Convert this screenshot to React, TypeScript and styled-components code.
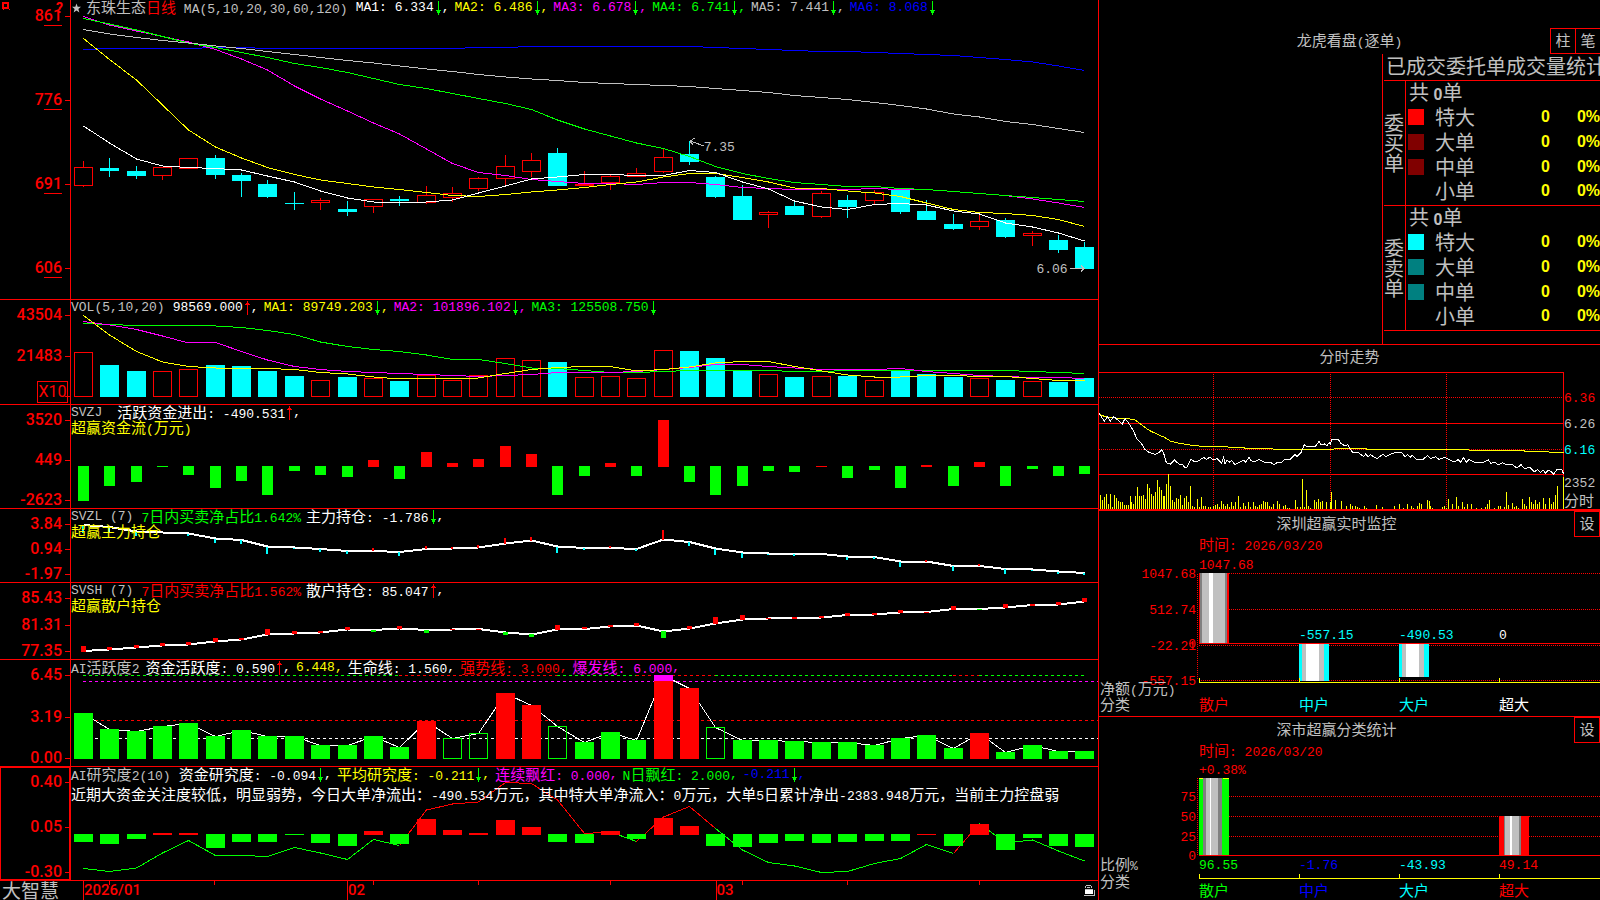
import React from 'react';
import styled, { createGlobalStyle, css } from 'styled-components';

const C = {
  red: '#ff0000',
  green: '#00ff00',
  cyan: '#00ffff',
  yellow: '#ffff00',
  magenta: '#ff00ff',
  blue: '#0000ff',
  gray: '#c0c0c0',
  dim: '#808080',
  white: '#ffffff',
};

const LATIN = "'Liberation Mono', 'Noto Sans CJK SC', monospace";
const HAN = "'Noto Sans CJK SC', sans-serif";
const AXIS = "Roboto, 'Liberation Sans', sans-serif";

const GlobalStyle = createGlobalStyle`
  * { box-sizing: border-box; }
  body { margin: 0; background: #000; color: ${C.gray}; font: 13px/15px ${LATIN}; }
  button { font: inherit; color: inherit; background: none; margin: 0; padding: 0; cursor: pointer; }
`;

/* ---------- shared pieces ---------- */

const Han = styled.span`
  font-family: ${HAN};
  font-size: 15px;
  line-height: 1;
`;

const HAN_RUN = /([\u3000-\u303f\u4e00-\u9fff\uff00-\uffef]+)/;

function Mixed({ text }: { text: string }) {
  return (
    <>
      {text.split(HAN_RUN).map((part, i) => (i % 2 ? <Han key={i}>{part}</Han> : part))}
    </>
  );
}

function SvgMixed({ text }: { text: string }) {
  return (
    <>
      {text.split(HAN_RUN).map((part, i) => (
        <tspan key={i} fontFamily={i % 2 ? HAN : LATIN} fontSize={i % 2 ? 15 : 13}>
          {part}
        </tspan>
      ))}
    </>
  );
}

const Page = styled.div`
  display: grid;
  grid-template-columns: minmax(0, 1fr) 502px;
  min-height: 100vh;
  overflow: hidden;
`;

/* ---------- left: stacked indicator panels ---------- */

const Charts = styled.main`
  display: grid;
  grid-template-rows: 300fr 105fr 104fr 74fr 77fr 107fr 114fr 19px;
  height: 100vh;
  min-height: 720px;
`;

const Panel = styled.section`
  display: grid;
  grid-template-columns: 71px minmax(0, 1fr);
  grid-template-rows: minmax(0, 1fr);
  min-height: 0;
  border-bottom: 1px solid ${C.red};
`;

const Axis = styled.div<{ $tall?: boolean; $active?: boolean }>`
  position: relative;
  display: flex;
  flex-direction: column;
  align-items: flex-end;
  justify-content: space-between;
  min-height: 0;
  padding: ${p => (p.$tall ? '8px 8px 23px' : '7px 8px 0')};
  border-right: 1px solid ${C.red};
  ${p =>
    p.$active &&
    css`
      box-shadow: inset 1px 1px ${C.red}, inset -1px -1px ${C.red};
    `}
`;

const AxisLabel = styled.span`
  position: relative;
  height: 16px;
  color: ${C.red};
  font: 500 16px/16px ${AXIS};
  &::after {
    content: '';
    position: absolute;
    top: 8px;
    right: -8px;
    width: 5px;
    height: 1px;
    background: ${C.red};
  }
`;

const Decimals = styled.span`
  display: inline-block;
  height: 18px;
  border-bottom: 1px solid ${C.red};
`;

const Unit = styled.span`
  position: absolute;
  right: 2px;
  bottom: 1px;
  width: 31px;
  border: 1px solid ${C.red};
  color: ${C.red};
  text-align: center;
  font: 16px/20px ${AXIS};
`;

const Help = styled.button`
  position: absolute;
  top: 1px;
  left: 56px;
  border: 0;
  font: bold 14px/14px ${AXIS};
  color: ${C.red};
`;

const Pin = styled.svg`
  position: absolute;
  top: 2px;
  left: 2px;
`;

const Plot = styled.div`
  position: relative;
  display: grid;
  grid-template-rows: minmax(0, 1fr);
  grid-template-columns: minmax(0, 1fr);
  min-height: 0;
  & > * {
    grid-area: 1 / 1;
  }
`;

const Graph = styled.svg`
  display: block;
  width: 100%;
  height: 100%;
  min-height: 0;
  & * {
    vector-effect: non-scaling-stroke;
  }
`;

const Legend = styled.div`
  z-index: 1;
  align-self: start;
`;

const LegendLine = styled.div<{ $low?: boolean }>`
  display: flex;
  align-items: center;
  gap: 5px;
  height: 15px;
  margin-top: ${p => (p.$low ? '5px' : 0)};
  white-space: pre;
  color: ${C.white};
`;

const Title = styled.span<{ $gap?: number }>`
  color: ${C.gray};
  margin-right: ${p => p.$gap ?? 3}px;
`;

const Star = styled.svg`
  margin-left: 1px;
`;

const Reading = styled.span<{ $c: string }>`
  display: inline-flex;
  align-items: center;
  color: ${p => p.$c};
`;

const Tinted = styled.span<{ $c: string }>`
  color: ${p => p.$c};
`;

function Arrow({ up }: { up?: boolean }) {
  return (
    <svg width="8" height="14" viewBox="0 0 8 14" shapeRendering="crispEdges" aria-hidden="true">
      {up ? (
        <path d="M4 0h1v14h-1zM3 2h3v1h-3zM2 3h5v1h-5z" fill={C.red} />
      ) : (
        <path d="M4 0h1v14h-1zM2 9h5v1h-5zM3 10h3v2h-3z" fill={C.green} />
      )}
    </svg>
  );
}

type Item = [text: string, color: string, dir?: 'up' | 'down' | '', end?: string];

function Readings({ items }: { items: Item[] }) {
  return (
    <>
      {items.map(([text, color, dir, end = ','], i) => (
        <Reading key={i} $c={color}>
          <span>
            <Mixed text={text} />
          </span>
          {dir && <Arrow up={dir === 'up'} />}
          {end}
        </Reading>
      ))}
    </>
  );
}

function Scale({ values }: { values: string[] }) {
  return (
    <>
      {values.map((v, i) => (
        <AxisLabel key={i}>{v}</AxisLabel>
      ))}
    </>
  );
}

const xs = (i: number) => Math.round(83 + 26.35 * i);

function Line({ data, color, from = 0, width = 1 }: { data: number[]; color: string; from?: number; width?: number }) {
  return (
    <polyline
      fill="none"
      stroke={color}
      strokeWidth={width}
      points={data.map((y, i) => `${xs(i + from) + 0.5},${y}`).join(' ')}
    />
  );
}

function Bar({ i, top, bottom, w, color, hollow }: { i: number; top: number; bottom: number; w: number; color: string; hollow?: boolean }) {
  const x = xs(i) - (w - 1) / 2;
  return hollow ? (
    <rect x={x + 0.5} y={top + 0.5} width={w - 1} height={Math.max(bottom - top - 1, 1)} fill="none" stroke={color} />
  ) : (
    <rect x={x} y={top} width={w} height={Math.max(bottom - top, 1)} fill={color} />
  );
}

function Chart({ y, h, children }: { y: number; h: number; children: React.ReactNode }) {
  return (
    <Graph viewBox={`71 ${y} 1027 ${h}`} preserveAspectRatio="none" shapeRendering="crispEdges">
      {children}
    </Graph>
  );
}

/* kind, high, body top, body bottom, low */
const candles: [string, number, number, number, number][] = [
  ['r', 161, 167, 186, 187], ['c', 158, 168, 171, 177], ['c', 166, 171, 176, 179], ['r', 167, 167, 176, 180],
  ['r', 158, 158, 169, 169], ['c', 155, 158, 175, 179], ['c', 173, 175, 181, 197], ['c', 180, 184, 197, 198],
  ['c', 192, 203, 204, 210], ['r', 198, 200, 203, 210], ['c', 201, 209, 212, 216], ['r', 199, 199, 207, 213],
  ['c', 196, 199, 201, 206], ['r', 186, 195, 203, 204], ['r', 187, 193, 198, 202], ['r', 177, 178, 189, 191],
  ['r', 155, 166, 179, 185], ['r', 153, 160, 172, 177], ['c', 148, 153, 186, 186], ['r', 171, 184, 186, 186],
  ['r', 174, 176, 183, 190], ['r', 168, 173, 177, 177], ['r', 149, 157, 172, 173], ['c', 141, 154, 162, 165],
  ['c', 176, 177, 197, 198], ['c', 185, 196, 220, 220], ['r', 211, 212, 215, 228], ['c', 202, 206, 215, 215],
  ['r', 191, 193, 217, 218], ['c', 195, 200, 207, 218], ['r', 190, 192, 201, 204], ['c', 189, 190, 212, 214],
  ['c', 200, 211, 220, 220], ['c', 214, 224, 229, 230], ['r', 213, 221, 227, 230], ['c', 218, 220, 237, 238],
  ['r', 231, 233, 236, 246], ['c', 235, 240, 250, 253], ['c', 242, 247, 269, 269],
];

const priceLines: [string, number[]][] = [
  [C.blue, [49.5, 48.5, 48.5, 48.5, 48.5, 47.5, 47.5, 48.5, 48.5, 48.5, 48.5, 48.5, 48.5, 48.5, 48.5, 47.5, 47.5, 46.5, 46.5, 46.5, 46.5, 46.5, 46.5, 46.5, 47.5, 48.5, 49.5, 50.5, 51.5, 51.5, 52.5, 53.5, 54.5, 55.5, 57.5, 59.5, 62, 66, 70.5]],
  [C.magenta, [16.5, 25, 31, 36.5, 42, 49.5, 59, 70, 86, 99, 111, 123, 134, 149, 163.5, 172.5, 175.5, 179.5, 181.5, 183.5, 183.5, 184.5, 182.5, 182.5, 184.5, 187.5, 188.5, 189.5, 189.5, 189.5, 188.5, 189.5, 189.5, 191.5, 193.5, 195.5, 199, 203, 207.5]],
  [C.green, [18.5, 24, 30, 36.5, 43, 47.5, 52.5, 57.5, 63.5, 67.5, 72.5, 78.5, 84.5, 88.5, 93.5, 98.5, 103.5, 109.5, 120, 129, 136, 143, 148.5, 156.5, 166.5, 173.5, 178.5, 182.5, 184.5, 186.5, 186.5, 188.5, 189.5, 191.5, 193.5, 195.5, 197.5, 199.5, 201.5]],
  [C.gray, [29.5, 34, 37.5, 40.5, 43, 46, 48.5, 51.5, 54.5, 57.5, 60.5, 63, 66, 69, 71.5, 74.5, 77, 79, 80.5, 82.5, 83.5, 84.5, 85.5, 86.5, 88.5, 90.5, 92.5, 95.5, 97.5, 99.5, 102.5, 105.5, 109, 114, 117, 121.5, 124.5, 128.5, 132.5]],
  [C.yellow, [38.5, 59.5, 80, 105, 130, 147, 158, 167.5, 174.5, 180, 183.5, 187, 189.5, 192.5, 195.5, 196.5, 194.5, 192, 190, 187.5, 184.5, 182, 177, 173.5, 173.5, 177.5, 182, 188, 188.5, 191, 193, 196.5, 203, 209.5, 212.5, 213.5, 215.5, 219.5, 226.5]],
  [C.white, [126, 143, 159, 166, 167.5, 168.5, 170, 176, 182, 191, 198, 202, 203, 202, 200, 193, 186, 179, 177, 174.5, 174.5, 175.5, 175.5, 170.5, 172.5, 182, 189, 201, 207, 209.5, 204.5, 203.5, 205, 211, 214, 223, 227, 233, 241]],
];

const volumes = 'r352 c365 c371 r371 r369 c365 c366 c371 c376 r380 c377 r378 c381 r375 r380 r375 r358 r360 c362 r377 r376 r378 r350 c351 c358 c370 r374 c377 r376 c376 r380 c371 c374 c377 r378 c380 r381 c382 c378'
  .split(' ').map(s => [s[0], Number(s.slice(1))] as [string, number]);

const volumeLines: [string, number[]][] = [
  [C.green, [323.5, 324.5, 325.5, 325.5, 325.5, 326, 327.5, 330.5, 334.5, 342, 346.5, 349.5, 351.5, 355, 359.5, 359.5, 363.5, 368, 368.5, 370.5, 372.5, 372.5, 371.5, 370.5, 370.5, 370.5, 370.5, 371.5, 371.5, 370.5, 370.5, 370.5, 370.5, 370.5, 370.5, 370.5, 371.5, 372.5, 373.5]],
  [C.magenta, [321.5, 325, 329.5, 336, 343, 342.5, 351.5, 360, 366.5, 369.5, 371.5, 372.5, 373.5, 374.5, 375.5, 376.5, 375.5, 374.5, 372.5, 372.5, 372.5, 371.5, 369.5, 367.5, 364.5, 364.5, 366.5, 368, 369.5, 369.5, 369.5, 368.5, 371.5, 373.5, 375.5, 376.5, 377.5, 377.5, 378.5]],
  [C.yellow, [315.5, 335, 351.5, 362, 366.5, 368, 368.5, 368.5, 369.5, 372.5, 374, 377, 379, 378.5, 378.5, 378, 373.5, 369.5, 367.5, 366.5, 366.5, 371, 369.5, 367, 363, 361.5, 361.5, 366.5, 371, 375, 377, 377, 375.5, 375.5, 376.5, 376.5, 378.5, 380.5, 380.5]],
];

const netFlow = [501, 486, 482, 467, 475, 488, 481, 495, 471, 475, 477, -460, 479, -452, -463, -459, -446, -454, 495, 476, -463, 476, -420, 482, 495, 486, 471, 472, -466, 478, 470, 488, -465, 486, -462, 486, 469, 476, 474];

const mainLine = [525, 527, 531.5, 532.5, 533.5, 538.5, 540, 546.5, 547.5, 549, 551, 551, 552, 549, 548.5, 547.5, 543.5, 540.5, 546.5, 548, 548, 549, 539.5, 542, 548.5, 552.5, 553.5, 554, 554, 556.5, 557, 561.5, 561.5, 566, 566, 569, 569.5, 571.5, 573];
const mainTicks = [533, 533, 536, 533, 536, 543, 544, 554, 549, 552, 554, 548, 556, 546, 547, 545, 538, 537, 553, 550, 546, 551, 530, 546, 555, 558, 555, 556, 554, 560, 559, 567, 560, 571, 564, 574, 571, 574, 575];

const retailLine = [651, 649.5, 647.5, 645.5, 644.5, 641.5, 639.5, 634.5, 633.5, 632.5, 629.5, 630, 628.5, 630, 629.5, 629, 632.5, 634.5, 629.5, 629, 626.5, 625.5, 631.5, 628.5, 623.5, 619.5, 618.5, 618, 617.5, 615, 614.5, 612.5, 612, 609, 609, 607.5, 605, 604.5, 601.5];
const retailTicks = 'r646-652 r647-650 r645-648 r643-646 r642-645 r638-642 r638-640 r629-635 r631-634 r631-633 r627-630 g630-632 r626-629 g630-633 r629-630 r629-630 g632-635 g634-637 r625-630 r627-629 r625-627 r623-626 g631-638 r626-629 r617-624 r615-620 r618-619 r617-619 r616-618 r613-616 r613-615 r610-613 r612-613 r606-610 g609-610 r604-608 r604-606 r602-605 r598-602'
  .split(' ').map(s => [s[0], ...s.slice(1).split('-').map(Number)] as [string, number, number]);

const activity = 'g713 g729 g731 g726 g723 g736 g730 g736 g736 g745 g745 g736 g747 r721 h738 h733 r693 r705 h726 g742 g732 g740 r675 r688 h727 g740 g740 g741 g742 g742 g745 g738 g735 g748 r733 g752 g745 g751 g751'
  .split(' ').map(s => [s[0], Number(s.slice(1))] as [string, number]);

const research = [842, 844, 839, -833, -833, 848, 842, 842, 835, 843, 846, -831, 844, -819, -830, -833, -820, -827, 842, 843, -831, 839, -818, -826, 846, 847, 843, 841, 843, 842, 841, 841, -834, 846, -824, 850, 838, 846, 847];
const researchLine = [868.5, 871.5, 868, 853, 840.5, 855.5, 855.5, 856.5, 847.5, 853, 859.5, 839.5, 845.5, 810, 804, 802, 782.5, 783.5, 800, 833.5, 832, 841.5, 817, 806.5, 828.5, 850, 862.5, 866, 872.5, 871.5, 863.5, 858.5, 844.5, 853.5, 823.5, 843, 840, 851, 861];
const researchRuns: [number, number, string][] = [
  [0, 12, C.green], [12, 20, C.red], [20, 21, C.green], [21, 24, C.red], [24, 33, C.green], [33, 34, C.red], [34, 38, C.green],
];

const ceilingRuns: [number, number, string][] = [
  [0, 12, C.green], [12, 18, C.red], [18, 21, C.green], [21, 24, C.red], [24, 33, C.green], [33, 34, C.red], [34, 38, C.green],
];

const Callout = styled.span<{ $x: string; $y: string }>`
  position: absolute;
  left: ${p => p.$x};
  top: ${p => p.$y};
  color: ${C.gray};
  z-index: 1;
`;

const TimeRow = styled.footer`
  display: grid;
  grid-template-columns: 71px minmax(0, 1fr);
`;

const Brand = styled.span`
  padding-left: 2px;
  font: 19px/17px ${HAN};
  white-space: nowrap;
`;

const Months = styled.div`
  display: flex;
  height: 19px;
  padding-left: 12px;
`;

const Month = styled.span<{ $grow: number }>`
  display: flex;
  align-items: center;
  justify-content: space-between;
  flex: ${p => p.$grow} 1 0;
  padding: 0 3px 0 0;
  border-left: 1px solid ${C.red};
  color: ${C.red};
  font: 500 15px/19px ${AXIS};
`;

function IndicatorPanels() {
  return (
    <Charts>
      <Panel>
        <Axis $tall>
          {['861', '776', '691', '606'].map(v => (
            <AxisLabel key={v}>
              {v[0]}
              <Decimals>{v.slice(1)}</Decimals>
            </AxisLabel>
          ))}
          <Pin width="8" height="8" viewBox="0 0 8 8" shapeRendering="crispEdges" aria-hidden="true">
            <path d="M0 0h7v7H0zM2 2v3h3V2z" fill={C.red} fillRule="evenodd" />
            <path d="M7 7h1v1H7zM1 7h1v1H1z" fill={C.red} />
          </Pin>
          <Help type="button">?</Help>
        </Axis>
        <Plot>
          <Chart y={0} h={299}>
            {candles.map(([k, hi, t, b, lo], i) => {
              const x = xs(i);
              const color = k === 'r' ? C.red : C.cyan;
              return (
                <g key={i} fill={color}>
                  {t > hi && <rect x={x} y={hi} width="1" height={t - hi} />}
                  {lo > b && <rect x={x} y={b} width="1" height={lo - b} />}
                  <Bar i={i} top={t} bottom={b} w={19} color={color} hollow={k === 'r'} />
                </g>
              );
            })}
            {priceLines.map(([c, d]) => (
              <Line key={c} data={d} color={c} />
            ))}
            <path d="M704 146l-14-5m5-3l-5 3l3 4M1070 268.5h14m-3 -3l3 3l-3 3" fill="none" stroke={C.gray} />
          </Chart>
          <Legend>
            <LegendLine>
              <Star width="9" height="10" viewBox="0 0 10 10" aria-hidden="true">
                <path d="M5 0l1.3 3.6H10L7.1 6l1.1 4L5 7.7 1.8 10l1.1-4L0 3.6h3.7z" fill={C.gray} />
              </Star>
              <Title>
                <Mixed text="东珠生态" />
                <Tinted $c={C.red}>
                  <Mixed text="日线" />
                </Tinted>
                {' MA(5,10,20,30,60,120)'}
              </Title>
              <Readings
                items={[
                  ['MA1: 6.334', C.white, 'down'],
                  ['MA2: 6.486', C.yellow, 'down'],
                  ['MA3: 6.678', C.magenta, 'down'],
                  ['MA4: 6.741', C.green, 'down'],
                  ['MA5: 7.441', C.gray, 'down'],
                  ['MA6: 8.068', C.blue, 'down', ''],
                ]}
              />
            </LegendLine>
          </Legend>
          <Callout $x="61.6%" $y="46.8%">7.35</Callout>
          <Callout $x="94%" $y="87.6%">6.06</Callout>
        </Plot>
      </Panel>

      <Panel>
        <Axis>
          <Scale values={['43504', '21483', '']} />
          <Unit>X10</Unit>
        </Axis>
        <Plot>
          <Chart y={300} h={104}>
            {volumes.map(([k, t], i) => (
              <Bar key={i} i={i} top={t} bottom={397} w={19} color={k === 'r' ? C.red : C.cyan} hollow={k === 'r'} />
            ))}
            {volumeLines.map(([c, d]) => (
              <Line key={c} data={d} color={c} />
            ))}
          </Chart>
          <Legend>
            <LegendLine>
              <Title>VOL(5,10,20)</Title>
              <Readings
                items={[
                  ['98569.000', C.white, 'up'],
                  ['MA1: 89749.203', C.yellow, 'down'],
                  ['MA2: 101896.102', C.magenta, 'down'],
                  ['MA3: 125508.750', C.green, 'down', ''],
                ]}
              />
            </LegendLine>
          </Legend>
        </Plot>
      </Panel>

      <Panel>
        <Axis>
          <Scale values={['3520', '449', '-2623']} />
        </Axis>
        <Plot>
          <Chart y={405} h={103}>
            {netFlow.map((v, i) => (
              <Bar key={i} i={i} top={v > 0 ? 466 : -v} bottom={v > 0 ? v : 467} w={11} color={v > 0 ? C.green : C.red} />
            ))}
          </Chart>
          <Legend>
            <LegendLine>
              <Title $gap={10}>SVZJ</Title>
              <Readings items={[['活跃资金进出: -490.531', C.white, 'up']]} />
            </LegendLine>
            <LegendLine>
              <Tinted $c={C.yellow}>
                <Mixed text="超赢资金流(万元)" />
              </Tinted>
            </LegendLine>
          </Legend>
        </Plot>
      </Panel>

      <Panel>
        <Axis>
          <Scale values={['3.84', '0.94', '-1.97']} />
        </Axis>
        <Plot>
          <Chart y={509} h={73}>
            <Line data={mainLine} color={C.white} width={2} />
            {mainTicks.map((t, i) => {
              const base = Math.round(mainLine[i]);
              return (
                <rect key={i} x={xs(i) - 1} y={Math.min(t, base)} width="2" height={Math.abs(t - base)} fill={t < base ? C.red : C.cyan} />
              );
            })}
          </Chart>
          <Legend>
            <LegendLine>
              <Title>SVZL (7)</Title>
              <Readings
                items={[
                  ['7日内买卖净占比1.642%', C.green, '', ''],
                  ['主力持仓: -1.786', C.white, 'down'],
                ]}
              />
            </LegendLine>
            <LegendLine>
              <Tinted $c={C.yellow}>
                <Mixed text="超赢主力持仓" />
              </Tinted>
            </LegendLine>
          </Legend>
        </Plot>
      </Panel>

      <Panel>
        <Axis>
          <Scale values={['85.43', '81.31', '77.35']} />
        </Axis>
        <Plot>
          <Chart y={583} h={76}>
            <Line data={retailLine} color={C.white} width={2} />
            {retailTicks.map(([k, t, b], i) => (
              <Bar key={i} i={i} top={t} bottom={b} w={5} color={k === 'r' ? C.red : C.green} />
            ))}
          </Chart>
          <Legend>
            <LegendLine>
              <Title>SVSH (7)</Title>
              <Readings
                items={[
                  ['7日内买卖净占比1.562%', C.red, '', ''],
                  ['散户持仓: 85.047', C.white, 'up'],
                ]}
              />
            </LegendLine>
            <LegendLine>
              <Tinted $c={C.yellow}>
                <Mixed text="超赢散户持仓" />
              </Tinted>
            </LegendLine>
          </Legend>
        </Plot>
      </Panel>

      <Panel>
        <Axis>
          <Scale values={['6.45', '3.19', '0.00']} />
        </Axis>
        <Plot>
          <Chart y={660} h={106}>
            {ceilingRuns.map(([a, b, c]) => (
              <path key={a} d={`M${xs(a)} 675.5H${xs(b)}`} stroke={c} strokeDasharray="3 3" />
            ))}
            <path d="M83 681.5H1098" stroke={C.magenta} strokeDasharray="3 3" />
            <path d="M83 720.5H1098" stroke={C.red} strokeDasharray="3 3" />
            <path d="M83 738.5H1098" stroke={C.white} strokeDasharray="3 3" />
            <Line data={activity.map(a => a[1] + 0.5)} color={C.white} />
            {activity.map(([k, t], i) => (
              <Bar key={i} i={i} top={t} bottom={759} w={19} color={k === 'r' ? C.red : C.green} hollow={k === 'h'} />
            ))}
            <Bar i={22} top={675} bottom={681} w={19} color={C.magenta} />
          </Chart>
          <Legend>
            <LegendLine>
              <Title $gap={1}>
                <Mixed text="AI活跃度2" />
              </Title>
              <Readings
                items={[
                  ['资金活跃度: 0.590', C.white, 'up'],
                  ['6.448', C.yellow],
                  ['生命线: 1.560', C.white],
                  ['强势线: 3.000', C.red],
                  ['爆发线: 6.000', C.magenta],
                ]}
              />
            </LegendLine>
          </Legend>
        </Plot>
      </Panel>

      <Panel>
        <Axis $active>
          <Scale values={['0.40', '0.05', '-0.30']} />
        </Axis>
        <Plot>
          <Chart y={767} h={113}>
            {researchRuns.map(([a, b, c]) => (
              <Line key={a} data={researchLine.slice(a, b + 1)} from={a} color={c} />
            ))}
            {research.map((v, i) => (
              <Bar key={i} i={i} top={v > 0 ? 834 : -v} bottom={v > 0 ? v : 835} w={19} color={v > 0 ? C.green : C.red} />
            ))}
          </Chart>
          <Legend>
            <LegendLine>
              <Title>
                <Mixed text="AI研究度2(10)" />
              </Title>
              <Readings
                items={[
                  ['资金研究度: -0.094', C.white, 'down'],
                  ['平均研究度: -0.211', C.yellow, 'down'],
                  ['连续飘红: 0.000', C.magenta],
                  ['N日飘红: 2.000', C.green],
                  ['-0.211', C.blue, 'down'],
                ]}
              />
            </LegendLine>
            <LegendLine $low>
              <span>
                <Mixed text="近期大资金关注度较低，明显弱势，今日大单净流出：-490.534万元，其中特大单净流入：0万元，大单5日累计净出-2383.948万元，当前主力控盘弱" />
              </span>
            </LegendLine>
          </Legend>
        </Plot>
      </Panel>

      <TimeRow>
        <Brand>大智慧</Brand>
        <Plot>
          <Chart y={881} h={19}>
            {[109, 214, 373, 478, 610, 742, 847, 979].map(x => (
              <rect key={x} x={x} y="881" width="1" height="4" fill={C.red} />
            ))}
          </Chart>
          <Months>
            <Month $grow={263}>2026/01</Month>
            <Month $grow={369}>02</Month>
            <Month $grow={383}>
              03
              <svg width="11" height="12" viewBox="0 0 11 12" shapeRendering="crispEdges" aria-label="锁定">
                <path d="M2 0h5v1H2zM1 1h1v2H1zM7 1h1v2H7zM3 2h3v1H3z" fill={C.gray} />
                <path d="M1 5h8v4H1z" fill={C.white} />
                <path d="M1 4h8v1H1zM0 10h10V5h1v6H0z" fill={C.gray} />
              </svg>
            </Month>
          </Months>
        </Plot>
      </TimeRow>
    </Charts>
  );
}

/* ---------- right column ---------- */

const Side = styled.aside`
  display: grid;
  grid-template-rows: 345px 165px 206px 1fr;
  border-left: 1px solid ${C.red};
  min-width: 0;
  overflow: hidden;
`;

const OrderBox = styled.section`
  display: grid;
  grid-template-columns: 283px minmax(0, 1fr);
  grid-template-rows: 54px minmax(0, 1fr);
  border-bottom: 1px solid ${C.red};
`;

const OrderHead = styled.header`
  grid-column: 1 / 3;
  display: flex;
  align-items: flex-end;
`;

const OrderTitle = styled.h2`
  flex: 1;
  margin: 0 0 4px;
  padding-left: 50px;
  text-align: center;
  font: inherit;
`;

const SquareButton = styled.button`
  width: 26px;
  height: 26px;
  border: 1px solid ${C.red};
`;

const Toggles = styled.div`
  display: flex;
  width: 50px;
  ${SquareButton} + ${SquareButton} {
    width: 24px;
    border-width: 1px 0;
  }
`;

const OrderStats = styled.div`
  grid-column: 2;
  border-left: 1px solid ${C.red};
  padding-left: 1px;
  min-width: 0;
`;

const StatsHeading = styled.h3`
  height: 27px;
  margin: 0;
  padding-left: 2px;
  border-bottom: 1px solid ${C.red};
  font: 20px/24px ${HAN};
  white-space: nowrap;
`;

const StatsTable = styled.table`
  width: 100%;
  border-collapse: separate;
  border-spacing: 0;
  table-layout: fixed;
  font: 20px/20px ${HAN};
  th, td {
    height: 25px;
    padding: 0 0 4px;
    font-weight: normal;
    text-align: left;
    white-space: nowrap;
  }
  tbody tr:last-child td, tbody tr:last-child th {
    border-bottom: 1px solid ${C.red};
  }
`;

const SideCell = styled.th`
  && {
    padding: 0;
    border-right: 1px solid ${C.red};
    border-bottom: 1px solid ${C.red};
  }
  span {
    display: block;
    width: 20px;
    white-space: normal;
    word-break: break-all;
  }
`;

const TotalCell = styled.td`
  && { padding-left: 3px; }
`;

const Swatch = styled.i<{ $c: string }>`
  display: block;
  width: 16px;
  height: 16px;
  margin-left: 2px;
  background: ${p => p.$c};
`;

const Num = styled.td`
  && {
    text-align: right;
    color: ${C.yellow};
    font: bold 16px/20px 'Liberation Sans', sans-serif;
  }
`;

const Digit = styled.b`
  font: bold 16px/10px 'Liberation Sans', sans-serif;
`;

function OrderGroup({ side, colors }: { side: string; colors: string[] }) {
  return (
    <tbody>
      <tr>
        <SideCell rowSpan={5} scope="rowgroup">
          <span>{side}</span>
        </SideCell>
        <TotalCell colSpan={4}>
          共 <Digit>0</Digit>单
        </TotalCell>
      </tr>
      {['特大', '大单', '中单', '小单'].map((n, i) => (
        <tr key={n}>
          <td>
            <Swatch $c={colors[i]} />
          </td>
          <th scope="row">{n}</th>
          <Num>0</Num>
          <Num>0%</Num>
        </tr>
      ))}
    </tbody>
  );
}

const Intraday = styled.section`
  display: flex;
  flex-direction: column;
  border-bottom: 1px solid ${C.red};
`;

const IntradayTitle = styled.h2`
  flex: none;
  margin: 0;
  padding-top: 3px;
  height: 27px;
  text-align: center;
  font: inherit;
`;

const IntradayBody = styled.div`
  display: grid;
  grid-template-columns: 465px 1fr;
`;

const Quotes = styled.div`
  display: flex;
  flex-direction: column;
  gap: 11px;
  padding: 19px 0 0;
`;

const QuoteFoot = styled.div`
  margin-top: 7px;
  line-height: 16px;
`;

const BarPanel = styled.section`
  display: grid;
  grid-template-rows: 25px 17px 1fr;
  border-top: 1px solid ${C.red};
  min-height: 0;
`;

const BarHead = styled.header`
  display: flex;
  align-items: center;
  h2 {
    flex: 1;
    margin: 0;
    text-align: center;
    font: inherit;
  }
`;

const Stamp = styled.time`
  padding-left: 100px;
  line-height: 13px;
  color: ${C.red};
`;

const BarSvg = styled.svg`
  display: block;
  width: 501px;
`;

const price = '12,220 20,232 28,243 38,230 46,243 56,230 66,238 82,252 90,236 100,248 108,260 118,278 124,295 140,312 150,328 160,336 180,343 192,338 200,330 206,340 214,368 226,372 238,360 252,372 262,372 270,384 276,382 288,358 300,366 312,362 326,352 334,358 344,352 356,360 366,356 380,370 386,352 390,372 396,360 404,366 410,362 420,374 432,368 446,360 452,366 462,352 468,362 478,366 492,358 510,368 525,366 536,374 546,368 560,368 568,358 586,358 600,344 606,350 618,338 628,314 636,320 662,318 672,304 678,314 688,312 696,318 702,308 706,312 710,298 730,298 738,310 750,318 758,314 766,328 772,336 790,338 806,350 812,342 820,350 826,344 846,356 864,342 872,350 884,344 900,338 920,338 930,350 938,344 946,352 952,346 966,360 984,358 998,346 1006,356 1022,350 1032,358 1050,352 1064,360 1080,366 1090,358 1096,368 1106,352 1114,366 1122,358 1130,362 1142,368 1166,366 1180,360 1188,370 1198,366 1210,374 1222,368 1234,374 1252,374 1266,384 1278,374 1288,386 1304,382 1318,396 1328,388 1336,398 1344,390 1352,400 1360,390 1368,394 1376,402 1386,388 1400,388 1406,402';
const average = '12,222 30,230 60,234 118,238 136,252 164,272 208,292 226,303 250,309 286,315 320,319 395,319 400,322 445,322 450,325 530,325 536,328 715,328 720,325 812,325 816,328 1120,328 1124,331 1286,331 1290,334 1360,334 1364,337 1406,337';
const trades = '16:465 22:480 28:471 34:462 40:492 46:462 52:501 58:465 64:474 70:483 76:486 82:486 88:495 94:495 100:495 106:468 109:486 115:492 121:468 127:441 133:468 139:468 145:465 151:477 157:432 163:444 169:462 175:468 181:456 187:420 193:441 199:450 205:468 208:468 214:432 220:402 226:438 232:480 238:486 244:474 250:477 256:465 262:495 268:474 274:468 280:486 286:438 292:498 298:501 307:477 313:501 319:471 325:498 331:498 340:501 346:501 355:498 361:495 367:492 373:501 379:483 385:492 391:498 397:492 403:501 409:486 415:498 421:486 430:468 436:501 445:489 451:498 460:486 466:501 475:486 481:498 487:501 493:495 499:492 505:483 511:486 517:486 523:498 529:501 535:492 547:483 553:492 565:498 571:495 577:504 583:504 601:480 607:501 616:501 622:417 628:501 634:450 640:498 646:504 658:480 664:486 670:477 676:486 682:483 694:486 706:486 709:456 721:480 739:483 754:498 766:492 772:498 781:498 787:501 793:504 808:498 814:504 844:495 862:501 898:498 913:492 925:504 937:492 949:498 955:504 967:498 973:489 979:492 997:480 1003:483 1006:498 1012:504 1042:501 1048:498 1054:504 1060:477 1072:492 1084:471 1090:498 1102:486 1108:501 1117:492 1129:492 1144:504 1159:504 1171:501 1177:492 1183:480 1198:504 1210:498 1216:498 1228:501 1234:456 1240:495 1252:489 1258:501 1264:498 1270:504 1282:477 1288:492 1294:498 1303:471 1309:486 1315:492 1321:480 1327:492 1333:486 1345:474 1351:492 1363:474 1369:492 1375:486 1381:465 1387:438 1404:411'
  .split(' ').map(s => s.split(':').map(Number));

function IntradayChart() {
  return (
    <svg width="465" height="137" viewBox="12 96 1395 411" shapeRendering="crispEdges" aria-label="分时走势">
      <g fill="none" stroke={C.red} strokeWidth="3">
        <path d="M12 97.5H1405.5V507M12 250.5H1405M12 403.5H1405" />
        <path d="M12 172.5H1405M12 328.5H1405M355.5 97V507M706.5 97V507M1054.5 97V507" strokeDasharray="3 3" />
      </g>
      {trades.map(([x, y]) => (
        <rect key={x} x={x} y={y} width="3" height={507 - y} fill={C.yellow} />
      ))}
      <polyline points={average} fill="none" stroke={C.yellow} strokeWidth="3" />
      <polyline points={price} fill="none" stroke={C.white} strokeWidth="3" />
    </svg>
  );
}

type Strip = [offset: number, width: number, color: string];

function Cylinder({ x, y, h, strips }: { x: number; y: number; h: number; strips: Strip[] }) {
  return (
    <>
      {strips.map(([o, w, c]) => (
        <rect key={o} x={x + o} y={y} width={w} height={h} fill={c} />
      ))}
    </>
  );
}

const coldStrips: Strip[] = [[0, 3, C.cyan], [3, 4, C.gray], [7, 13, C.white], [20, 5, C.gray], [25, 5, C.cyan]];

function Label({ x, y, text, color, end }: { x: number; y: number; text: string; color: string; end?: boolean }) {
  return (
    <text x={x} y={y} fill={color} textAnchor={end ? 'end' : 'start'}>
      <SvgMixed text={text} />
    </text>
  );
}

function Sidebar() {
  return (
    <Side>
      <OrderBox>
        <OrderHead>
          <OrderTitle>
            <Mixed text="龙虎看盘(逐单)" />
          </OrderTitle>
          <Toggles>
            <SquareButton type="button">
              <Han>柱</Han>
            </SquareButton>
            <SquareButton type="button">
              <Han>笔</Han>
            </SquareButton>
          </Toggles>
        </OrderHead>
        <OrderStats>
          <StatsHeading>已成交委托单成交量统计</StatsHeading>
          <StatsTable>
            <colgroup>
              <col width="22" />
              <col width="29" />
              <col width="55" />
              <col width="60" />
              <col width="50" />
            </colgroup>
            <OrderGroup side="委买单" colors={['#ff0000', '#800000', '#800000', 'transparent']} />
            <OrderGroup side="委卖单" colors={['#00ffff', '#008080', '#008080', 'transparent']} />
          </StatsTable>
        </OrderStats>
      </OrderBox>

      <Intraday>
        <IntradayTitle>
          <Han>分时走势</Han>
        </IntradayTitle>
        <IntradayBody>
          <IntradayChart />
          <Quotes>
            <Tinted $c={C.red}>6.36</Tinted>
            <span>6.26</span>
            <Tinted $c={C.cyan}>6.16</Tinted>
            <QuoteFoot>
              2352
              <br />
              <Han>分时</Han>
            </QuoteFoot>
          </Quotes>
        </IntradayBody>
      </Intraday>

      <BarPanel>
        <BarHead>
          <h2>
            <Han>深圳超赢实时监控</Han>
          </h2>
          <SquareButton type="button">
            <Han>设</Han>
          </SquareButton>
        </BarHead>
        <Stamp dateTime="2026-03-20">
          <Mixed text="时间: 2026/03/20" />
        </Stamp>
        <BarSvg viewBox="1099 553 501 163" height="163" shapeRendering="crispEdges">
          <path d="M1229 573.5H1600M1229 609.5H1600M1199 645.5H1600M1199 680.5H1600M1197.5 574V680" stroke={C.red} strokeDasharray="1 1" />
          <rect x="1199" y="643" width="401" height="1" fill={C.red} />
          <Cylinder x={1199} y={573} h={70} strips={[[0, 1, C.red], [1, 2, C.dim], [3, 7, C.gray], [10, 4, C.white], [14, 12, C.gray], [26, 2, C.dim], [28, 2, C.red]]} />
          <Cylinder x={1299} y={644} h={37} strips={coldStrips} />
          <Cylinder x={1399} y={644} h={33} strips={coldStrips} />
          <path d="M1199.5 678V682.5H1600M1299.5 678V682M1399.5 678V682M1499.5 678V682" fill="none" stroke={C.yellow} />
          <Label x={1199} y={569} text="1047.68" color={C.red} />
          <Label x={1299} y={639} text="-557.15" color={C.cyan} />
          <Label x={1399} y={639} text="-490.53" color={C.cyan} />
          <Label x={1499} y={639} text="0" color={C.white} />
          <Label x={1196} y={578} text="1047.68" color={C.red} end />
          <Label x={1196} y={614} text="512.74" color={C.red} end />
          <Label x={1196} y={650} text="-22.21" color={C.red} end />
          <Label x={1196} y={648} text="0" color={C.red} end />
          <Label x={1196} y={685} text="-557.15" color={C.red} end />
          <Label x={1100} y={694} text="净额(万元)" color={C.gray} />
          <Label x={1100} y={710} text="分类" color={C.gray} />
          <Label x={1199} y={710} text="散户" color={C.red} />
          <Label x={1299} y={710} text="中户" color={C.cyan} />
          <Label x={1399} y={710} text="大户" color={C.cyan} />
          <Label x={1499} y={710} text="超大" color={C.white} />
        </BarSvg>
      </BarPanel>

      <BarPanel>
        <BarHead>
          <h2>
            <Han>深市超赢分类统计</Han>
          </h2>
          <SquareButton type="button">
            <Han>设</Han>
          </SquareButton>
        </BarHead>
        <Stamp dateTime="2026-03-20">
          <Mixed text="时间: 2026/03/20" />
        </Stamp>
        <BarSvg viewBox="1099 759 501 141" height="141" shapeRendering="crispEdges">
          <path d="M1229 796.5H1600M1229 816.5H1600M1229 836.5H1600M1197.5 778V855" stroke={C.red} strokeDasharray="1 1" />
          <Cylinder x={1199} y={778} h={77} strips={[[0, 4, C.green], [4, 3, C.dim], [7, 4, C.gray], [11, 1, C.white], [12, 7, C.gray], [19, 4, C.dim], [23, 7, C.green]]} />
          <path d="M1199 778.5h4M1223 778.5h6" stroke={C.yellow} />
          <Cylinder x={1499} y={816} h={39} strips={[[0, 5, C.red], [5, 1, C.dim], [6, 5, C.gray], [11, 2, C.white], [13, 7, C.gray], [20, 2, C.dim], [22, 8, C.red]]} />
          <rect x="1199" y="855" width="401" height="1" fill={C.red} />
          <path d="M1199.5 874V878.5H1600M1299.5 874V878M1399.5 874V878M1499.5 874V878" fill="none" stroke={C.yellow} />
          <Label x={1199} y={774} text="+0.38%" color={C.red} />
          <Label x={1196} y={801} text="75" color={C.red} end />
          <Label x={1196} y={821} text="50" color={C.red} end />
          <Label x={1196} y={841} text="25" color={C.red} end />
          <Label x={1196} y={860} text="0" color={C.red} end />
          <Label x={1199} y={869} text="96.55" color={C.green} />
          <Label x={1299} y={869} text="-1.76" color={C.blue} />
          <Label x={1399} y={869} text="-43.93" color={C.cyan} />
          <Label x={1499} y={869} text="49.14" color={C.red} />
          <Label x={1100} y={870} text="比例%" color={C.gray} />
          <Label x={1100} y={887} text="分类" color={C.gray} />
          <Label x={1199} y={896} text="散户" color={C.green} />
          <Label x={1299} y={896} text="中户" color={C.blue} />
          <Label x={1399} y={896} text="大户" color={C.cyan} />
          <Label x={1499} y={896} text="超大" color={C.red} />
        </BarSvg>
      </BarPanel>
    </Side>
  );
}

export default function App() {
  return (
    <>
      <GlobalStyle />
      <Page>
        <IndicatorPanels />
        <Sidebar />
      </Page>
    </>
  );
}
